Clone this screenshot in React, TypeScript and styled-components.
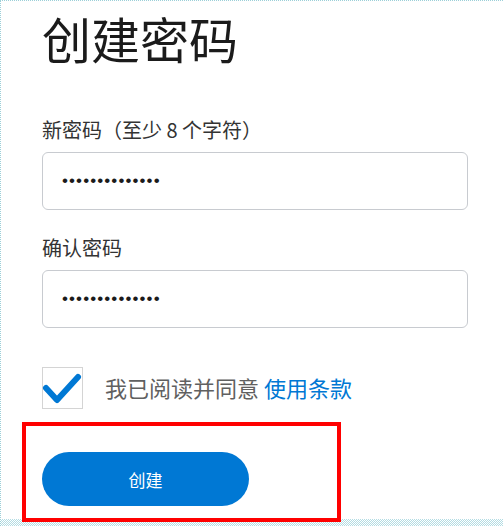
import styled, { createGlobalStyle } from 'styled-components';

const GlobalStyle = createGlobalStyle`
  html, body {
    margin: 0;
    padding: 0;
    background: #fff;
  }
  body {
    font-family: 'Noto Sans CJK SC', 'Noto Sans', sans-serif;
  }
`;

const App = () => {
  return (
    <Frame>
      <GlobalStyle />
      <Title>创建密码</Title>

      <Field>
        <Label htmlFor='new-password'>新密码（至少 8 个字符）</Label>
        <PasswordInput id='new-password' type='password' value='abcdefghijklmn' readOnly />
      </Field>

      <Field $gap={28}>
        <Label htmlFor='confirm-password'>确认密码</Label>
        <PasswordInput id='confirm-password' type='password' value='abcdefghijklmn' readOnly />
      </Field>

      <AgreeRow>
        <CheckBox role='checkbox' aria-checked='true'>
          <svg width='41' height='42' viewBox='0 0 41 42'>
            <path
              d='M4 21 L15 33 L36 10'
              fill='none'
              stroke='#0078d4'
              strokeWidth='6'
              strokeLinecap='round'
              strokeLinejoin='round'
            />
          </svg>
        </CheckBox>
        <AgreeText>
          我已阅读并同意 <TermsLink href='#'>使用条款</TermsLink>
        </AgreeText>
      </AgreeRow>

      <Highlight>
        <CreateButton type='button'>创建</CreateButton>
      </Highlight>
    </Frame>
  );
};

const Frame = styled.div`
  position: relative;
  box-sizing: border-box;
  width: 503px;
  height: 526px;
  padding-left: 41px;
  border-top: 1px dotted #9ccfd8;
  border-left: 1px dotted #9ccfd8;
  overflow: hidden;

  &::after {
    content: '';
    position: absolute;
    left: 0;
    right: 0;
    bottom: 0;
    height: 7px;
    background: repeating-conic-gradient(#b3dce3 0 25%, #fff 0 50%) 0 0 / 2px 2px;
  }
`;

const Title = styled.h1`
  margin: 12px 0 0;
  font-size: 49px;
  line-height: 49px;
  font-weight: 400;
  color: #1b1b1b;
`;

const Field = styled.div<{ $gap?: number }>`
  display: flex;
  flex-direction: column;
  gap: 12px;
  margin-top: ${({ $gap }) => $gap ?? 58}px;
`;

const Label = styled.label`
  font-size: 20px;
  line-height: 20px;
  color: #333;
`;

const PasswordInput = styled.input`
  box-sizing: border-box;
  width: 426px;
  height: 58px;
  padding: 0 0 0 19px;
  border: 1px solid #c8cbd0;
  border-radius: 6px;
  background: #fff;
  font-family: 'Liberation Sans', Arial, sans-serif;
  font-size: 17px;
  letter-spacing: 1.1px;
  color: #1b1b1b;
  outline: none;
`;

const AgreeRow = styled.div`
  display: flex;
  align-items: center;
  gap: 22px;
  margin-top: 39px;
`;

const CheckBox = styled.div`
  box-sizing: border-box;
  width: 41px;
  height: 42px;
  border: 1px solid #d4d4d4;
  display: flex;
  align-items: center;
  justify-content: center;

  svg {
    flex: none;
    overflow: visible;
  }
`;

const AgreeText = styled.span`
  font-size: 22px;
  line-height: 22px;
  color: #606060;
  margin-top: -3px;
`;

const TermsLink = styled.a`
  color: #0078d4;
  text-decoration: none;
`;

const Highlight = styled.div`
  position: relative;
  z-index: 1;
  box-sizing: border-box;
  width: 319px;
  height: 100px;
  margin: 13px 0 0 -20px;
  padding: 26px 0 0 16px;
  border: 4px solid #ff0000;
`;

const CreateButton = styled.button`
  width: 207px;
  height: 54px;
  border: none;
  border-radius: 27px;
  background: #0078d4;
  color: #fff;
  font-family: 'Noto Sans CJK SC', sans-serif;
  font-size: 17px;
  cursor: pointer;
`;

export default App;
